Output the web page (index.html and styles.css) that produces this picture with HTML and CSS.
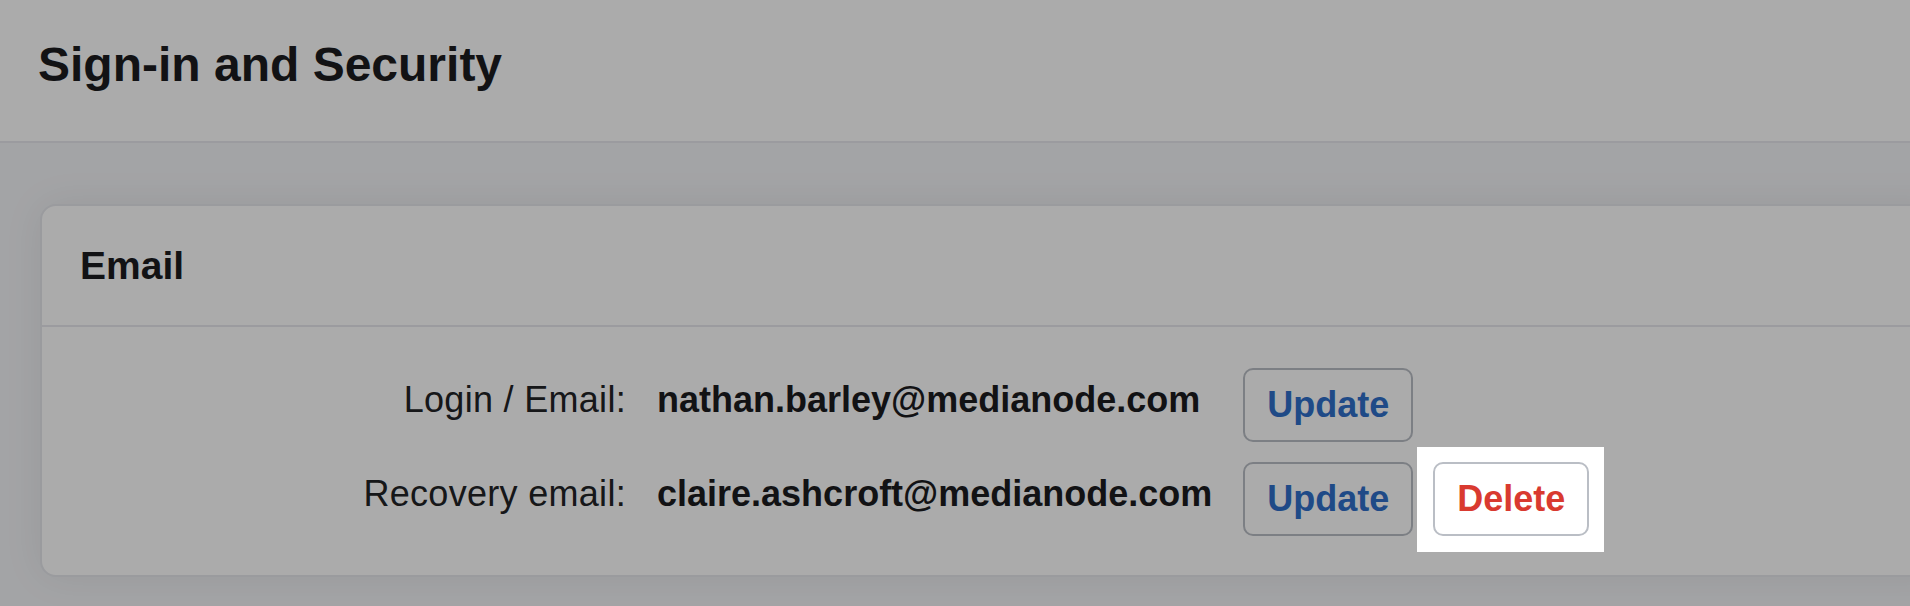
FILE: index.html
```html
<!DOCTYPE html>
<html lang="en">
<head>
<meta charset="utf-8">
<title>Sign-in and Security</title>
<link rel="stylesheet" href="styles.css">
</head>
<body>
<div class="app">
  <header class="page-header">
    <h1 class="page-title">Sign-in and Security</h1>
  </header>
  <main class="content">
    <section class="card">
      <div class="card-header">
        <h2 class="card-title">Email</h2>
      </div>
      <div class="card-body">
        <div class="fields">
          <div class="field-label">Login / Email:</div>
          <div class="field-value">nathan.barley@medianode.com</div>
          <div class="field-actions">
            <button class="btn btn-primary" type="button">Update</button>
          </div>

          <div class="field-label">Recovery email:</div>
          <div class="field-value">claire.ashcroft@medianode.com</div>
          <div class="field-actions">
            <button class="btn btn-primary" type="button">Update</button>
            <span class="spotlight">
              <button class="btn btn-danger" type="button">Delete</button>
            </span>
          </div>
        </div>
      </div>
    </section>
  </main>
</div>
</body>
</html>
```

FILE: styles.css
```css
html, body {
  margin: 0;
  padding: 0;
}

body {
  overflow: hidden;
  background: #f4f5f8;
  font-family: "Liberation Sans", Arial, sans-serif;
  color: #1b1c1f;
}

.app {
  min-height: 606px;
}

.page-header {
  background: #ffffff;
  padding: 37px 38px 48px;
  border-bottom: 2px solid #e8e8ee;
}

.page-title {
  margin: 0;
  font-size: 48px;
  line-height: 56px;
  font-weight: 700;
  color: #1b1c1f;
}

.content {
  padding: 61px 0 0 40px;
}

.card {
  margin-right: -40px;
  background: #ffffff;
  border: 2px solid #e6e7ec;
  border-radius: 16px;
  box-shadow: 0 0 40px rgba(0, 0, 0, 0.07);
}

.card-header {
  padding: 38px 38px 37px;
  border-bottom: 2px solid #e8e8ee;
}

.card-title {
  margin: 0;
  font-size: 39px;
  line-height: 44px;
  font-weight: 700;
}

.card-body {
  padding: 41px 40px 39px;
}

.fields {
  display: grid;
  grid-template-columns: 544px max-content max-content;
  column-gap: 31px;
  row-gap: 20px;
  align-items: center;
}

.field-label,
.field-value {
  font-size: 36px;
  line-height: 44px;
  padding-bottom: 10px;
  white-space: nowrap;
}

.field-label {
  text-align: right;
  font-weight: 400;
  color: #222326;
  letter-spacing: 0.3px;
}

.field-value {
  font-weight: 700;
  color: #1b1c1f;
}

.field-actions {
  display: flex;
  align-items: center;
  gap: 20px;
}

.btn {
  font-family: "Liberation Sans", Arial, sans-serif;
  font-size: 36px;
  line-height: 42px;
  font-weight: 700;
  padding: 14px 22px;
  background: #ffffff;
  border: 2px solid #babec5;
  border-radius: 10px;
  cursor: pointer;
}

.btn-primary {
  color: #2f6fca;
}

.btn-danger {
  color: #d93a30;
}

.spotlight {
  position: relative;
  z-index: 10;
  display: inline-flex;
}

.spotlight::before {
  content: "";
  position: absolute;
  top: -15px;
  right: -15px;
  bottom: -16px;
  left: -16px;
  z-index: -1;
  background: #ffffff;
  box-shadow: 0 0 0 4000px rgba(0, 0, 0, 0.33);
}
```
